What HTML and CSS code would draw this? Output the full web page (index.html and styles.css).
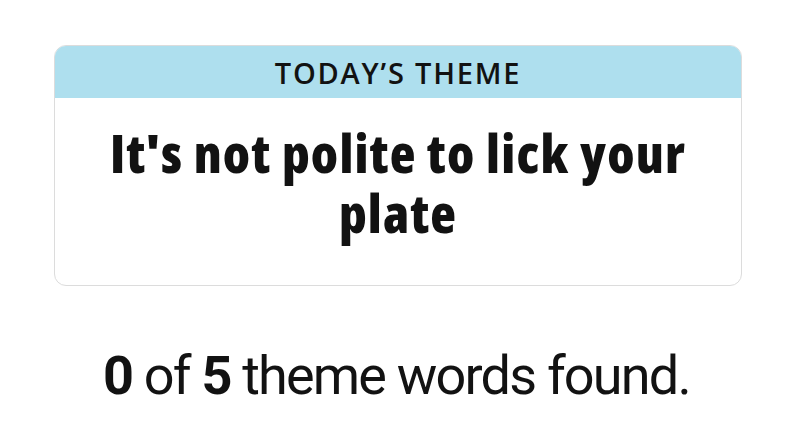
FILE: index.html
```html
<!DOCTYPE html>
<html lang="en">
<head>
<meta charset="utf-8">
<title>Strands theme</title>
<link rel="stylesheet" href="styles.css">
</head>
<body>
<main class="page">
  <section class="theme-card">
    <h2 class="theme-label">TODAY’S THEME</h2>
    <div class="theme-body">
      <h1 class="theme-title">It's not polite to lick your plate</h1>
    </div>
  </section>
  <p class="progress"><b>0</b> of <b>5</b> theme words found.</p>
</main>
</body>
</html>
```
FILE: styles.css
```css
html, body {
  margin: 0;
  padding: 0;
  background: #ffffff;
}
.page {
  width: 793px;
  padding-top: 45px;
  display: flex;
  flex-direction: column;
  align-items: center;
  font-family: "Open Sans", sans-serif;
  color: #121212;
}
.theme-card {
  width: 688px;
  margin-left: 3px;
  border: 1px solid #dcdcdc;
  border-radius: 12px;
  overflow: hidden;
  box-sizing: border-box;
}
.theme-label {
  margin: 0;
  height: 52px;
  background: #aedfee;
  display: flex;
  align-items: center;
  justify-content: center;
  font-family: "Open Sans", sans-serif;
  font-weight: 600;
  font-size: 29px;
  letter-spacing: 1.8px;
  color: #121212;
}
.theme-body {
  box-sizing: border-box;
  height: 187px;
  display: flex;
  align-items: center;
  justify-content: center;
  padding: 0 40px 18px;
}
.theme-title {
  margin: 0;
  text-align: center;
  font-family: "Open Sans", sans-serif;
  font-stretch: condensed;
  font-weight: 800;
  font-size: 53px;
  letter-spacing: 1.2px;
  line-height: 60px;
  color: #121212;
}
.progress {
  margin: 57px 0 0 0;
  font-family: Roboto, sans-serif;
  font-weight: 400;
  font-size: 54px;
  letter-spacing: -1.8px;
  line-height: 66px;
  color: #121212;
}
.progress b {
  font-weight: 700;
}
```
